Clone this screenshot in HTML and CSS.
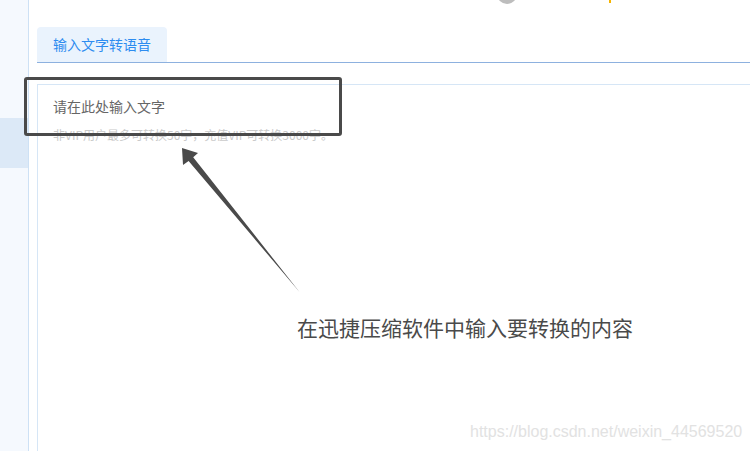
FILE: index.html
```html
<!DOCTYPE html>
<html lang="zh-CN">
<head>
<meta charset="utf-8">
<title>输入文字转语音</title>
<link rel="stylesheet" href="styles.css">
</head>
<body>
<div class="app">
  <aside class="sidebar">
    <div class="side-active"></div>
  </aside>
  <main class="main">
    <div class="topbar">
      <span class="avatar"></span>
      <span class="vip-mark"></span>
    </div>
    <div class="tabs">
      <div class="tab">输入文字转语音</div>
    </div>
    <div class="editor">
      <div class="placeholder">请在此处输入文字</div>
      <div class="hint">非VIP用户最多可转换50字，充值VIP可转换3000字。</div>
    </div>
  </main>
</div>
<div class="callout-box"></div>
<svg class="arrow" width="750" height="451" viewBox="0 0 750 451">
  <polygon points="182,148 198,153 193.2,157.2 299.5,292 188.6,161 183,165" fill="#4a4a4a"/>
</svg>
<div class="callout-text">在迅捷压缩软件中输入要转换的内容</div>
<div class="watermark">https://blog.csdn.net/weixin_44569520</div>
</body>
</html>
```
FILE: styles.css
```css
html, body {
  margin: 0;
  padding: 0;
}
body {
  width: 750px;
  height: 451px;
  overflow: hidden;
  background: #ffffff;
  font-family: "Noto Sans CJK SC", "Noto Sans", sans-serif;
  position: relative;
}
.app {
  display: flex;
  height: 451px;
}
.sidebar {
  width: 28px;
  flex: none;
  background: #f5f9fe;
  border-right: 1px solid #cde1f5;
  padding-top: 118px;
  box-sizing: content-box;
}
.side-active {
  height: 50px;
  background: #dce9f7;
}
.main {
  flex: 1;
  display: flex;
  flex-direction: column;
  padding-left: 8px;
}
.topbar {
  height: 27px;
  display: flex;
  align-items: flex-start;
  padding-left: 460px;
}
.avatar {
  width: 20px;
  height: 20px;
  border-radius: 50%;
  background: #bdbdbd;
  margin-top: -16px;
}
.vip-mark {
  width: 2px;
  height: 3px;
  background: #f6b400;
  margin-left: 92px;
}
.tabs {
  display: flex;
  height: 35px;
  border-bottom: 1px solid #8db1df;
}
.tab {
  width: 114px;
  padding-left: 16px;
  background: #eaf3fd;
  border-radius: 4px 4px 0 0;
  color: #2d8cf0;
  font-size: 14px;
  line-height: 35px;
}
.editor {
  flex: 1;
  margin-top: 21px;
  border-top: 1px solid #d6e6f6;
  border-left: 1px solid #d6e6f6;
  padding: 11px 15px;
}
.placeholder {
  font-size: 14px;
  line-height: 20px;
  color: #666666;
}
.hint {
  margin-top: 9px;
  font-size: 12px;
  line-height: 20px;
  color: #cacaca;
}
.callout-box {
  position: absolute;
  left: 24px;
  top: 77px;
  width: 312px;
  height: 53px;
  border: 3px solid #4a4a4a;
  border-radius: 3px;
}
.arrow {
  position: absolute;
  left: 0;
  top: 0;
}
.callout-text {
  position: absolute;
  left: 297px;
  top: 313px;
  font-size: 21px;
  line-height: 28px;
  color: #4a4a4a;
  white-space: nowrap;
}
.watermark {
  position: absolute;
  left: 470px;
  top: 422px;
  font-family: "Liberation Sans", Arial, sans-serif;
  font-size: 16px;
  line-height: 20px;
  color: #e2e2e2;
  white-space: nowrap;
}
```
